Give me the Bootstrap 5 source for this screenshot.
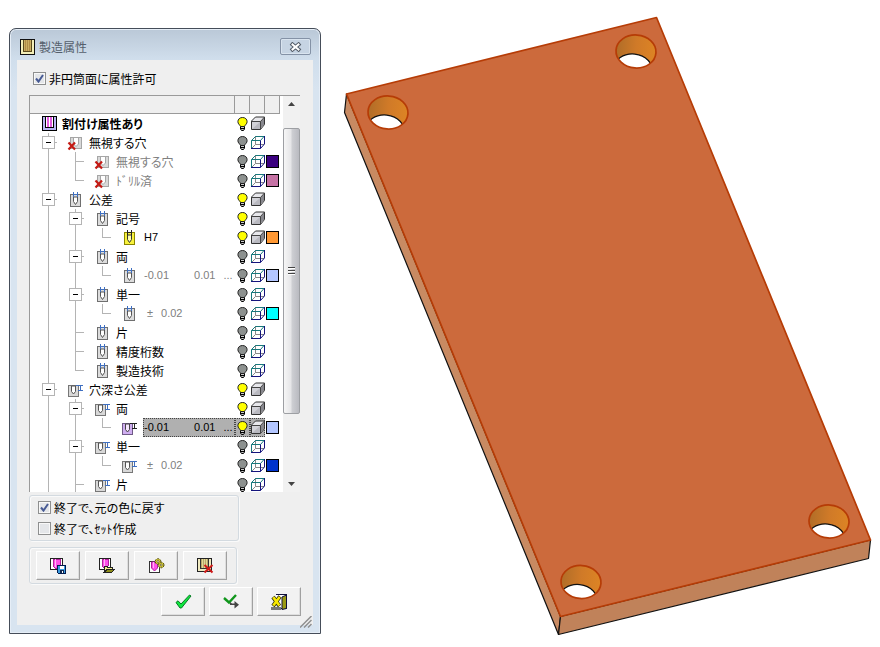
<!DOCTYPE html>
<html lang="ja">
<head>
<meta charset="utf-8">
<meta name="viewport" content="width=device-width, initial-scale=1">
<title>製造属性</title>
<link href="https://cdn.jsdelivr.net/npm/bootstrap@5.3.0/dist/css/bootstrap.min.css" rel="stylesheet">
<style>
  body { font: 12px/19px "Noto Sans CJK JP", "Liberation Sans", sans-serif; font-feature-settings: "palt"; color: #000; background: #fff; }
  svg { display: block; flex: none; }
  .defs { display: none; }
  .px { shape-rendering: crispEdges; }
  .dlg { flex: 0 0 312px; margin: 28px 0 13px 9px; padding: 0 7px 8px; border: 1px solid #454d59; border-radius: 7px 7px 0 0; box-shadow: inset 0 0 0 1px #e6eef7; background: linear-gradient(#bac8d7, #d0deec 30px, #d8e4f0 60px); }
  .dlg-title { height: 31px; padding: 4px 2px 0 3px; }
  .dlg-title h1 { font-size: 12px; line-height: 19px; color: #555f6c; }
  .dlg-close { width: 31px; height: 17px; border: 1px solid #8492a6; border-radius: 2px; background: #c6d4e3; box-shadow: inset 0 0 0 1px #d9e4ef; }
  .dlg-body { background: #efefef; padding: 8px 12px 11px; }
  .tick { gap: 3px; min-height: 21px; }
  .tick .form-check-input { width: 13px; height: 13px; margin: 0; border: 1px solid #8e8f8f; border-radius: 0; background-color: #e4e6e9; background-size: 11px 11px; box-shadow: inset 0 0 0 1px #f8f8f8; flex: none; }
  .tick .form-check-input:checked { background-color: #e4e6e9; background-image: url("data:image/svg+xml,%3Csvg xmlns='http://www.w3.org/2000/svg' viewBox='0 0 11 11'%3E%3Cpath d='M2 5.5L4.5 8.5L9 2' fill='none' stroke='%23475a94' stroke-width='2'/%3E%3C/svg%3E"); }
  .pane { height: 397px; margin: 6px 1px 0 0; border-top: 1px solid #9a9a9a; border-left: 1px solid #9a9a9a; background: #fff; overflow: hidden; }
  .tree-box { flex: 1 1 0; min-width: 0; }
  .tree { border-collapse: separate; border-spacing: 0; table-layout: fixed; width: 100%; }
  .tree th { height: 18px; padding: 0; background: #efefef; border-right: 1px solid #9a9a9a; border-bottom: 1px solid #9a9a9a; }
  .tree td { height: 19px; padding: 0; }
  .tree .narrow { width: 15px; }
  .line { height: 19px; padding-left: 5px; white-space: nowrap; }
  .line button { border: 0; padding: 0; background: none; }
  .faded { color: #808080; }
  .num { padding-left: 1px; font-family: "Liberation Sans", sans-serif; font-size: 11px; gap: 8px; }
  .num .far { margin-left: 17px; }
  .picked { background: #b0b0b0; outline: 1px dotted #444; outline-offset: -1px; }
  .chip { width: 13px; height: 13px; border: 1px solid #000; margin-left: 1px; }
  .scroller { width: 17px; margin-left: 3px; background: #f1f1f1; }
  .scroller button { height: 16px; border: 0; padding: 0; background: none; }
  .lead-gap { height: 16px; }
  .thumb { flex: 284; border: 1px solid #9d9fa3; border-radius: 2px; background: linear-gradient(90deg, #f6f6f6, #e6e6e8 45%, #cdced2 55%, #b9bac0); }
  .trail { flex: 62; }
  .panel { border: 1px solid #d3dae0; border-radius: 3px; box-shadow: inset 1px 1px 0 #fafafa, 1px 1px 0 #fafafa; }
  .opts { margin: 3px 62px 0 0; padding: 1px 8px; }
  .tools { margin: 6px 64px 0 0; padding: 3px 6px; gap: 5px; }
  .key { width: 44px; height: 29px; padding: 0; border: 1px solid; border-color: #fff #a0a0a0 #a0a0a0 #fff; border-radius: 0; background: #f2f2f2; box-shadow: inset -1px -1px 0 #dedede; display: flex; align-items: center; justify-content: center; }
  .finish { gap: 4px; margin-top: 3px; }
  .grip { margin: 0 -11px -14px 0; }
  .view { min-width: 0; }
  .view svg { width: 100%; height: auto; }
</style>
</head>
<body>
<svg class="defs" xmlns="http://www.w3.org/2000/svg">
  <symbol id="g-v" viewBox="0 0 27 19"><path d="M13.5 0V19" stroke="#b4b4b4"/></symbol>
  <symbol id="g-t" viewBox="0 0 27 19"><path d="M13.5 0V19M13 9.5H22" stroke="#b4b4b4"/></symbol>
  <symbol id="g-l" viewBox="0 0 27 19"><path d="M13.5 0V9.5H22" fill="none" stroke="#b4b4b4"/></symbol>
  <symbol id="g-x" viewBox="0 0 27 19"><path d="M13.5 0V19M20 9.5H22" stroke="#b4b4b4"/><rect x="7.5" y="3.5" width="12" height="12" fill="#fff" stroke="#b4b4b4"/><path d="M11 9.5H16" stroke="#000"/></symbol>
  <symbol id="i-root" viewBox="0 0 27 19"><rect x="7" y="2" width="15" height="15" fill="#000"/><rect x="8" y="3" width="13" height="13" fill="#b9b4f5"/><rect x="10" y="3" width="9" height="11" fill="#000"/><rect x="11" y="3" width="7" height="10" fill="#fff"/><rect x="12" y="3" width="2" height="10" fill="#e25be0"/><rect x="15" y="3" width="2" height="10" fill="#e25be0"/></symbol>
  <symbol id="i-skip" viewBox="0 0 27 19"><rect x="8" y="4" width="12" height="12" fill="#a6a6a6"/><rect x="9" y="5" width="10" height="10" fill="#d9d9d9"/><path d="M11.500 5V11L14 13.500L16.500 11V5" fill="#fff" stroke="#a6a6a6" shape-rendering="auto"/><path d="M6.500 9.500L13 16.500M13 9.500L6.500 16.500" stroke="#c41a14" stroke-width="2.200" shape-rendering="auto"/></symbol>
  <symbol id="i-pin" viewBox="0 0 27 19"><rect x="8" y="4" width="11" height="13" fill="#6f6f6f"/><rect x="9" y="5" width="9" height="11" fill="#dcdcdc"/><path d="M11.500 7V11.500L13.500 14.500L15.500 11.500V7Z" fill="#fff" stroke="#555" shape-rendering="auto"/><path d="M11 2h1v5h-1zM15 2h1v5h-1zM12 4h3v1h-3z" fill="#3f6fc0"/></symbol>
  <symbol id="i-pin-on" viewBox="0 0 27 19"><rect x="8" y="4" width="11" height="13" fill="#8a8400"/><rect x="9" y="5" width="9" height="11" fill="#f8f23c"/><path d="M11.500 7V11.500L13.500 14.500L15.500 11.500V7Z" fill="#ffffb0" stroke="#333" shape-rendering="auto"/><path d="M11 2h1v5h-1zM15 2h1v5h-1zM12 4h3v1h-3z" fill="#222"/></symbol>
  <symbol id="i-deep" viewBox="0 0 27 19"><rect x="6" y="5" width="11" height="12" fill="#777"/><rect x="7" y="6" width="9" height="10" fill="#d8d8d8"/><path d="M9.500 6V11.500L11.500 14L13.500 11.500V6Z" fill="#fff" stroke="#555" shape-rendering="auto"/><path d="M14 5h7v1h-7zM16 10h5v1h-5zM18 6h1v4h-1z" fill="#3f6fc0"/></symbol>
  <symbol id="i-deep-on" viewBox="0 0 27 19"><rect x="6" y="5" width="11" height="12" fill="#6f5a86"/><rect x="7" y="6" width="9" height="10" fill="#cfaef0"/><path d="M9.500 6V11.500L11.500 14L13.500 11.500V6Z" fill="#f6e6ff" stroke="#444" shape-rendering="auto"/><path d="M14 5h7v1h-7zM16 10h5v1h-5zM18 6h1v4h-1z" fill="#222"/></symbol>
  <symbol id="lit" viewBox="0 0 15 19"><path d="M5.500 12.500V15L6.500 16.500H8.500L9.500 15V12.500Z" fill="#ccc" stroke="#000"/><path d="M5 14.500H10" stroke="#000"/><path d="M7.500 3.500C10.300 3.500 12.100 5.300 12.100 7.700C12.100 10 10.300 10.500 9.500 12.500H5.500C4.700 10.500 2.900 10 2.900 7.700C2.900 5.300 4.700 3.500 7.500 3.500Z" fill="#ffff00" stroke="#222"/></symbol>
  <symbol id="dark" viewBox="0 0 15 19"><path d="M5.500 12.500V15L6.500 16.500H8.500L9.500 15V12.500Z" fill="#ccc" stroke="#000"/><path d="M5 14.500H10" stroke="#000"/><path d="M7.500 3.500C10.300 3.500 12.100 5.300 12.100 7.700C12.100 10 10.300 10.500 9.500 12.500H5.500C4.700 10.500 2.900 10 2.900 7.700C2.900 5.300 4.700 3.500 7.500 3.500Z" fill="#8d918f" stroke="#222"/></symbol>
  <symbol id="solid" viewBox="0 0 15 19"><path d="M1.500 7L5.500 3H14.500V10.500L10.500 15.500H1.500Z" fill="#e8e8ec" stroke="#333"/><path d="M2 8H10V15H2Z" fill="#b9b9c0"/><path d="M2 8H10L2 15Z" fill="#d2d2d8"/><path d="M10.500 7.500L14 4V10.500L10.500 15Z" fill="#88888e"/><path d="M1.500 7.500H10.500V15.500M10.500 7.500L14.500 3" fill="none" stroke="#444"/></symbol>
  <symbol id="wire" viewBox="0 0 15 19"><path d="M5.500 3V11.500H14M5.500 11.500L1.500 15.500" fill="none" stroke="#888"/><path d="M1.500 15.500V7.500L5.500 3.500H14M1.500 7.500H10.500L14 3.500" fill="none" stroke="#17787c"/><path d="M1 15.500H10.500V7.500M14.500 3V11L10.500 15.500" fill="none" stroke="#14147c"/></symbol>
</svg>

<main class="d-flex align-items-start">
  <section class="dlg" aria-labelledby="dlg-name">
    <header class="dlg-title d-flex align-items-center">
      <svg class="px" width="15" height="16" viewBox="0 0 15 16"><rect width="15" height="16" fill="#111"/><rect x="1" y="1" width="13" height="14" fill="#f4efb8"/><rect x="3" y="1" width="9" height="12" fill="#5a4a1c"/><rect x="4" y="1" width="7" height="11" fill="#c9ae62"/><path d="M5 1h1v11h-1zM7 1h1v11h-1zM9 1h1v11h-1z" fill="#b08c48"/></svg>
      <h1 id="dlg-name" class="mb-0 ms-1 me-auto fw-normal">製造属性</h1>
      <button type="button" class="dlg-close p-0 d-flex align-items-center justify-content-center" aria-label="閉じる"><svg width="13" height="10" viewBox="0 0 13 10"><path d="M3.500 2.500L9.500 7.500M9.500 2.500L3.500 7.500" stroke="#505a66" stroke-width="4" stroke-linecap="square"/><path d="M3.500 2.500L9.500 7.500M9.500 2.500L3.500 7.500" stroke="#fff" stroke-width="2" stroke-linecap="square"/></svg></button>
    </header>
    <div class="dlg-body">
      <div class="tick d-flex align-items-center ms-1"><input class="form-check-input" type="checkbox" id="allow" checked><label for="allow">非円筒面に属性許可</label></div>

      <div class="pane d-flex">
        <div class="tree-box">
        <table class="tree">
          <colgroup><col><col class="narrow"><col class="narrow"><col class="narrow"></colgroup>
          <thead><tr><th scope="col" aria-label="属性"></th><th scope="col" aria-label="点灯"></th><th scope="col" aria-label="表示"></th><th scope="col" aria-label="色"></th></tr></thead>
          <tbody>
            <tr><td><div class="line d-flex"><svg class="px" width="27" height="19"><use href="#i-root"/></svg><b class="name">割付け属性あり</b></div></td><td><svg width="15" height="19"><use href="#lit"/></svg></td><td><svg width="15" height="19"><use href="#solid"/></svg></td><td></td></tr>
            <tr><td><div class="line d-flex"><button type="button" aria-label="折りたたむ"><svg class="px" width="27" height="19"><use href="#g-x"/></svg></button><svg class="px" width="27" height="19"><use href="#i-skip"/></svg><span class="name">無視する穴</span></div></td><td><svg width="15" height="19"><use href="#dark"/></svg></td><td><svg width="15" height="19"><use href="#wire"/></svg></td><td></td></tr>
            <tr><td><div class="line d-flex"><svg class="px" width="27" height="19"><use href="#g-v"/></svg><svg class="px" width="27" height="19"><use href="#g-t"/></svg><svg class="px" width="27" height="19"><use href="#i-skip"/></svg><span class="name faded">無視する穴</span></div></td><td><svg width="15" height="19"><use href="#dark"/></svg></td><td><svg width="15" height="19"><use href="#wire"/></svg></td><td><div class="chip" style="background:#3b0080"></div></td></tr>
            <tr><td><div class="line d-flex"><svg class="px" width="27" height="19"><use href="#g-v"/></svg><svg class="px" width="27" height="19"><use href="#g-l"/></svg><svg class="px" width="27" height="19"><use href="#i-skip"/></svg><span class="name faded">ﾄﾞﾘﾙ済</span></div></td><td><svg width="15" height="19"><use href="#dark"/></svg></td><td><svg width="15" height="19"><use href="#wire"/></svg></td><td><div class="chip" style="background:#c572a4"></div></td></tr>
            <tr><td><div class="line d-flex"><button type="button" aria-label="折りたたむ"><svg class="px" width="27" height="19"><use href="#g-x"/></svg></button><svg class="px" width="27" height="19"><use href="#i-pin"/></svg><span class="name">公差</span></div></td><td><svg width="15" height="19"><use href="#lit"/></svg></td><td><svg width="15" height="19"><use href="#solid"/></svg></td><td></td></tr>
            <tr><td><div class="line d-flex"><svg class="px" width="27" height="19"><use href="#g-v"/></svg><button type="button" aria-label="折りたたむ"><svg class="px" width="27" height="19"><use href="#g-x"/></svg></button><svg class="px" width="27" height="19"><use href="#i-pin"/></svg><span class="name">記号</span></div></td><td><svg width="15" height="19"><use href="#lit"/></svg></td><td><svg width="15" height="19"><use href="#solid"/></svg></td><td></td></tr>
            <tr><td><div class="line d-flex"><svg class="px" width="27" height="19"><use href="#g-v"/></svg><svg class="px" width="27" height="19"><use href="#g-v"/></svg><svg class="px" width="27" height="19"><use href="#g-l"/></svg><svg class="px" width="27" height="19"><use href="#i-pin-on"/></svg><span class="name num">H7</span></div></td><td><svg width="15" height="19"><use href="#lit"/></svg></td><td><svg width="15" height="19"><use href="#solid"/></svg></td><td><div class="chip" style="background:#ff9833"></div></td></tr>
            <tr><td><div class="line d-flex"><svg class="px" width="27" height="19"><use href="#g-v"/></svg><button type="button" aria-label="折りたたむ"><svg class="px" width="27" height="19"><use href="#g-x"/></svg></button><svg class="px" width="27" height="19"><use href="#i-pin"/></svg><span class="name">両</span></div></td><td><svg width="15" height="19"><use href="#dark"/></svg></td><td><svg width="15" height="19"><use href="#wire"/></svg></td><td></td></tr>
            <tr><td><div class="line d-flex"><svg class="px" width="27" height="19"><use href="#g-v"/></svg><svg class="px" width="27" height="19"><use href="#g-v"/></svg><svg class="px" width="27" height="19"><use href="#g-l"/></svg><svg class="px" width="27" height="19"><use href="#i-pin"/></svg><span class="name num faded d-flex"><span>-0.01</span><span class="far">0.01</span><span>...</span></span></div></td><td><svg width="15" height="19"><use href="#dark"/></svg></td><td><svg width="15" height="19"><use href="#wire"/></svg></td><td><div class="chip" style="background:#b3c6ff"></div></td></tr>
            <tr><td><div class="line d-flex"><svg class="px" width="27" height="19"><use href="#g-v"/></svg><button type="button" aria-label="折りたたむ"><svg class="px" width="27" height="19"><use href="#g-x"/></svg></button><svg class="px" width="27" height="19"><use href="#i-pin"/></svg><span class="name">単一</span></div></td><td><svg width="15" height="19"><use href="#dark"/></svg></td><td><svg width="15" height="19"><use href="#wire"/></svg></td><td></td></tr>
            <tr><td><div class="line d-flex"><svg class="px" width="27" height="19"><use href="#g-v"/></svg><svg class="px" width="27" height="19"><use href="#g-v"/></svg><svg class="px" width="27" height="19"><use href="#g-l"/></svg><svg class="px" width="27" height="19"><use href="#i-pin"/></svg><span class="name num faded d-flex ps-1"><span>±</span><span>0.02</span></span></div></td><td><svg width="15" height="19"><use href="#dark"/></svg></td><td><svg width="15" height="19"><use href="#wire"/></svg></td><td><div class="chip" style="background:#00ffff"></div></td></tr>
            <tr><td><div class="line d-flex"><svg class="px" width="27" height="19"><use href="#g-v"/></svg><svg class="px" width="27" height="19"><use href="#g-t"/></svg><svg class="px" width="27" height="19"><use href="#i-pin"/></svg><span class="name">片</span></div></td><td><svg width="15" height="19"><use href="#dark"/></svg></td><td><svg width="15" height="19"><use href="#wire"/></svg></td><td></td></tr>
            <tr><td><div class="line d-flex"><svg class="px" width="27" height="19"><use href="#g-v"/></svg><svg class="px" width="27" height="19"><use href="#g-t"/></svg><svg class="px" width="27" height="19"><use href="#i-pin"/></svg><span class="name">精度桁数</span></div></td><td><svg width="15" height="19"><use href="#dark"/></svg></td><td><svg width="15" height="19"><use href="#wire"/></svg></td><td></td></tr>
            <tr><td><div class="line d-flex"><svg class="px" width="27" height="19"><use href="#g-v"/></svg><svg class="px" width="27" height="19"><use href="#g-l"/></svg><svg class="px" width="27" height="19"><use href="#i-pin"/></svg><span class="name">製造技術</span></div></td><td><svg width="15" height="19"><use href="#dark"/></svg></td><td><svg width="15" height="19"><use href="#wire"/></svg></td><td></td></tr>
            <tr><td><div class="line d-flex"><button type="button" aria-label="折りたたむ"><svg class="px" width="27" height="19"><use href="#g-x"/></svg></button><svg class="px" width="27" height="19"><use href="#i-deep"/></svg><span class="name">穴深さ公差</span></div></td><td><svg width="15" height="19"><use href="#lit"/></svg></td><td><svg width="15" height="19"><use href="#solid"/></svg></td><td></td></tr>
            <tr><td><div class="line d-flex"><svg class="px" width="27" height="19"><use href="#g-v"/></svg><button type="button" aria-label="折りたたむ"><svg class="px" width="27" height="19"><use href="#g-x"/></svg></button><svg class="px" width="27" height="19"><use href="#i-deep"/></svg><span class="name">両</span></div></td><td><svg width="15" height="19"><use href="#lit"/></svg></td><td><svg width="15" height="19"><use href="#solid"/></svg></td><td></td></tr>
            <tr aria-selected="true"><td><div class="line d-flex"><svg class="px" width="27" height="19"><use href="#g-v"/></svg><svg class="px" width="27" height="19"><use href="#g-v"/></svg><svg class="px" width="27" height="19"><use href="#g-l"/></svg><svg class="px" width="27" height="19"><use href="#i-deep-on"/></svg><span class="name num picked flex-grow-1 d-flex"><span>-0.01</span><span class="far">0.01</span><span>...</span></span></div></td><td class="picked"><svg width="15" height="19"><use href="#lit"/></svg></td><td class="picked"><svg width="15" height="19"><use href="#solid"/></svg></td><td><div class="chip" style="background:#b3c6ff"></div></td></tr>
            <tr><td><div class="line d-flex"><svg class="px" width="27" height="19"><use href="#g-v"/></svg><button type="button" aria-label="折りたたむ"><svg class="px" width="27" height="19"><use href="#g-x"/></svg></button><svg class="px" width="27" height="19"><use href="#i-deep"/></svg><span class="name">単一</span></div></td><td><svg width="15" height="19"><use href="#dark"/></svg></td><td><svg width="15" height="19"><use href="#wire"/></svg></td><td></td></tr>
            <tr><td><div class="line d-flex"><svg class="px" width="27" height="19"><use href="#g-v"/></svg><svg class="px" width="27" height="19"><use href="#g-v"/></svg><svg class="px" width="27" height="19"><use href="#g-l"/></svg><svg class="px" width="27" height="19"><use href="#i-deep"/></svg><span class="name num faded d-flex ps-1"><span>±</span><span>0.02</span></span></div></td><td><svg width="15" height="19"><use href="#dark"/></svg></td><td><svg width="15" height="19"><use href="#wire"/></svg></td><td><div class="chip" style="background:#0033cc"></div></td></tr>
            <tr><td><div class="line d-flex"><svg class="px" width="27" height="19"><use href="#g-v"/></svg><svg class="px" width="27" height="19"><use href="#g-t"/></svg><svg class="px" width="27" height="19"><use href="#i-deep"/></svg><span class="name">片</span></div></td><td><svg width="15" height="19"><use href="#dark"/></svg></td><td><svg width="15" height="19"><use href="#wire"/></svg></td><td></td></tr>
          </tbody>
        </table>
        </div>
        <div class="scroller d-flex flex-column flex-shrink-0">
          <button type="button" class="d-flex align-items-center justify-content-center" aria-label="上へ"><svg width="7" height="4" viewBox="0 0 7 4"><path d="M0 4L3.500 0L7 4Z" fill="#444"/></svg></button>
          <div class="lead-gap"></div>
          <div class="thumb d-flex align-items-center justify-content-center"><svg class="px" width="7" height="9" viewBox="0 0 7 9"><path d="M0 0h7v1h-7zM0 3h7v1h-7zM0 6h7v1h-7z" fill="#444"/><path d="M0 1h7v1h-7zM0 4h7v1h-7zM0 7h7v1h-7z" fill="#fff"/></svg></div>
          <div class="trail"></div>
          <button type="button" class="d-flex align-items-center justify-content-center" aria-label="下へ"><svg width="7" height="4" viewBox="0 0 7 4"><path d="M0 0L3.500 4L7 0Z" fill="#444"/></svg></button>
        </div>
      </div>

      <div class="panel opts">
        <div class="tick d-flex align-items-center"><input class="form-check-input" type="checkbox" id="restore" checked><label for="restore">終了で、元の色に戻す</label></div>
        <div class="tick d-flex align-items-center"><input class="form-check-input" type="checkbox" id="makeset"><label for="makeset">終了で、ｾｯﾄ作成</label></div>
      </div>

      <div class="panel tools d-flex">
        <button type="button" class="key" aria-label="保存"><svg class="px" width="16" height="16" viewBox="0 0 16 16"><path d="M.5 .5H12.500V11.500H.5Z" fill="#fff" stroke="#222"/><path d="M3 1H10V8L8 10H5L3 8Z" fill="#ff50e8" stroke="#b0209c"/><path d="M5.500 1V9" stroke="#ffb4f6"/><path d="M7.500 7.500H15.500V15.500H8.500L7.500 14.500Z" fill="#3a9be0" stroke="#001c50"/><rect x="10" y="8" width="4" height="3" fill="#fff"/><rect x="10" y="12" width="4" height="3" fill="#102850"/><rect x="12" y="13" width="1" height="2" fill="#fff"/></svg></button>
        <button type="button" class="key" aria-label="開く"><svg class="px" width="16" height="16" viewBox="0 0 16 16"><path d="M.5 .5H11.500V11.500H.5Z" fill="#fff" stroke="#222"/><path d="M3 1H9V8L7 10H5L3 8Z" fill="#ff50e8" stroke="#b0209c"/><path d="M5.500 1V9" stroke="#ffb4f6"/><path d="M5.500 14.500V8.500H8L9 9.500H13.500V11" fill="#f4ec8c" stroke="#222"/><path d="M5 14.500L8 11.500H15.500L12.500 14.500Z" fill="#8c8c18" stroke="#222"/></svg></button>
        <button type="button" class="key" aria-label="設定"><svg width="17" height="16" viewBox="0 0 17 16"><path class="px" d="M1.500 3.500H11.500V14.500H1.500Z" fill="#fff" stroke="#333"/><path d="M3.500 4H9.500V10L6.500 13L3.500 10Z" fill="#ff50e8" stroke="#b0209c"/><path d="M5.500 4V10" stroke="#ffb4f6"/><circle cx="10" cy="3.500" r="2.800" fill="#d6cc3c" stroke="#4a4508" stroke-dasharray="2 1"/><circle cx="13.200" cy="7" r="2.800" fill="#d6cc3c" stroke="#4a4508" stroke-dasharray="2 1"/><circle cx="10" cy="3.500" r="1" fill="#fff" stroke="#4a4508" stroke-width=".7"/><circle cx="13.200" cy="7" r="1" fill="#fff" stroke="#4a4508" stroke-width=".7"/></svg></button>
        <button type="button" class="key" aria-label="削除"><svg width="17" height="16" viewBox="0 0 17 16"><path class="px" d="M.5 .5H14.500V13.500H.5Z" fill="#f0eac0" stroke="#222"/><path class="px" d="M3.500 1V10.500H11.500V1" fill="#b8a868" stroke="#333"/><path class="px" d="M5.500 1V10M7.500 1V10M9.500 1V10" stroke="#e2d898"/><path d="M7.500 7L15.500 14.500M15.500 7L7.500 14.500" stroke="#d01818" stroke-width="2"/></svg></button>
      </div>

      <div class="finish d-flex justify-content-end">
        <button type="button" class="key" aria-label="OK"><svg width="17" height="15" viewBox="0 0 17 15"><path d="M1 8.500L3 6.800L6 10L14.500 1L16 2L6.500 14H5Z" fill="#10e840" stroke="#067a22"/></svg></button>
        <button type="button" class="key" aria-label="適用"><svg width="17" height="15" viewBox="0 0 17 15"><path d="M1 4L6 8.500L13 1" fill="none" stroke="#10961c" stroke-width="2.400"/><path d="M7 8V11H11.500V14.500L16 10.700L11.500 7V9.500H9Z" fill="#444"/></svg></button>
        <button type="button" class="key" aria-label="キャンセル"><svg width="16" height="16" viewBox="0 0 16 16"><path class="px" d="M4.500 .5H15.500V14.500H8.500" fill="#fff" stroke="#10103c"/><path d="M11 3L15.500 1V14.500L11 15.500Z" fill="#9a9a12" stroke="#10103c"/><path class="px" d="M0 13H10V16H0Z" fill="#777"/><path d="M2 3L8.500 12M9 2.500L2 12" stroke="#30300a" stroke-width="4"/><path d="M2.300 3.200L8.300 11.500M8.700 3L2.300 11.500" stroke="#f8e800" stroke-width="2.600"/></svg></button>
      </div>
      <svg class="grip ms-auto" width="12" height="12" viewBox="0 0 12 12"><path d="M0 11.500L11.500 0M4 11.500L11.500 4M8 11.500L11.500 8" stroke="#8f8f8f" stroke-width="1.500"/></svg>
    </div>
  </section>

  <div class="view flex-grow-1">
    <svg viewBox="321 0 559 647" role="img" aria-label="穴あきプレートの3Dモデル">
      <defs>
        <linearGradient id="bore" x1="0" x2="1" y1="0" y2="0"><stop offset="0" stop-color="#b06d28"/><stop offset=".5" stop-color="#d07a28"/><stop offset="1" stop-color="#dd8424"/></linearGradient>
        <clipPath id="rim"><ellipse rx="20" ry="16.500" transform="rotate(4)"/></clipPath>
        <g id="hole">
          <ellipse rx="20" ry="16.500" transform="rotate(4)" fill="url(#bore)"/>
          <g clip-path="url(#rim)"><ellipse rx="20" ry="17" transform="translate(-3 19.500) rotate(6)" fill="#fff" stroke="#111" stroke-width="1.200"/></g>
          <ellipse rx="20" ry="16.500" transform="rotate(4)" fill="none" stroke="#b63c06" stroke-width="1.700"/>
        </g>
      </defs>
      <path d="M346.500 94L344.500 112.500L558.500 634.500L560.500 616.500Z" fill="#c88a62" stroke="#111" stroke-width="1.200" stroke-linejoin="round"/>
      <path d="M560.500 616.500L558.500 634.500L868.500 558.500L870.500 540Z" fill="#c0825a" stroke="#111" stroke-width="1.200" stroke-linejoin="round"/>
      <path d="M346.500 94L656.500 17.500L870.500 540L560.500 616.500Z" fill="#cc6a3c" stroke="#b63c06" stroke-width="1.700" stroke-linejoin="round"/>
      <use href="#hole" transform="translate(388 112.500)"/>
      <use href="#hole" transform="translate(636 51.500)"/>
      <use href="#hole" transform="translate(581 582)"/>
      <use href="#hole" transform="translate(829 521.500)"/>
    </svg>
  </div>
</main>
<script src="https://cdn.jsdelivr.net/npm/bootstrap@5.3.0/dist/js/bootstrap.bundle.min.js"></script>
</body>
</html>
